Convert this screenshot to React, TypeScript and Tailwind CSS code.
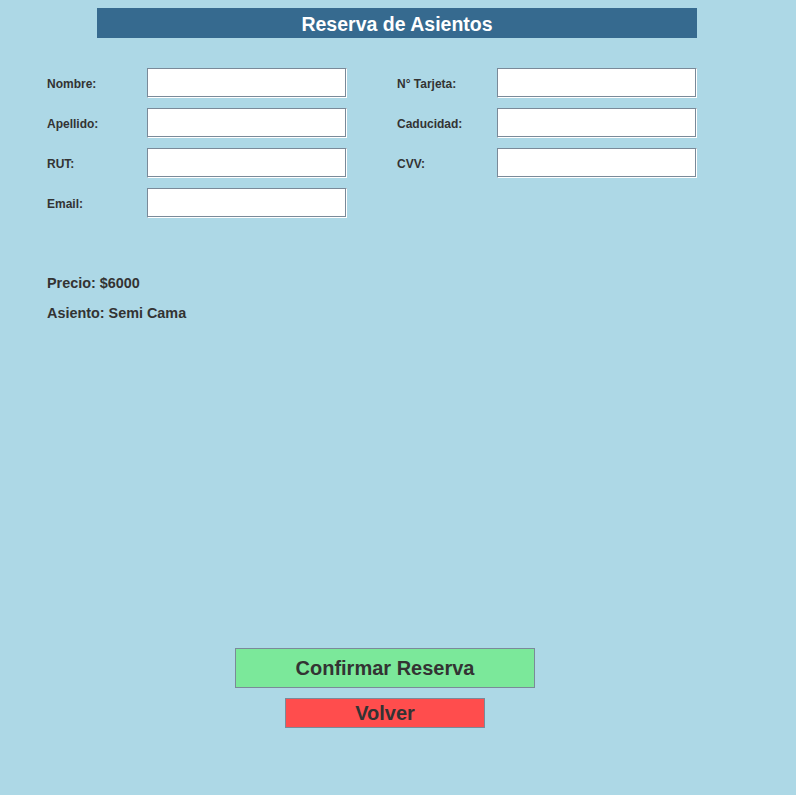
import React from "react";

const font = { fontFamily: '"Liberation Sans", Arial, sans-serif' };

function Field({ label }: { label: string }) {
  return (
    <div className="flex items-center h-[30px]">
      <label className="w-[100px] pt-[2px] text-[12px] font-bold text-[#333333] leading-none">{label}</label>
      <input
        type="text"
        className="w-[200px] h-[30px] bg-white border-t border-l border-b border-r border-t-[#7a8a99] border-l-[#7a8a99] border-b-white border-r-white shadow-[inset_-1px_-1px_0_#7a8a99] outline-none"
      />
    </div>
  );
}

export default function App() {
  return (
    <div className="min-h-[795px] w-full bg-[#add8e6] pt-[8px]" style={font}>
      <div className="ml-[97px] w-[600px] h-[30px] pt-[3px] bg-[#366a8f] flex items-center justify-center">
        <h1 className="text-white font-bold text-[19.5px] leading-none">Reserva de Asientos</h1>
      </div>

      <div className="mt-[30px] pl-[47px] flex gap-[50px]">
        <div className="flex flex-col gap-[10px]">
          <Field label="Nombre:" />
          <Field label="Apellido:" />
          <Field label="RUT:" />
          <Field label="Email:" />
        </div>
        <div className="flex flex-col gap-[10px]">
          <Field label="N° Tarjeta:" />
          <Field label="Caducidad:" />
          <Field label="CVV:" />
        </div>
      </div>

      <div className="mt-[55px] pl-[47px] flex flex-col gap-[10px]">
        <p className="text-[14.4px] leading-[20px] font-bold text-[#333333]">Precio: $6000</p>
        <p className="text-[14.4px] leading-[20px] font-bold text-[#333333]">Asiento: Semi Cama</p>
      </div>

      <div className="mt-[325px] w-[770px] flex flex-col items-center gap-[10px]">
        <button className="w-[300px] h-[40px] bg-[#7be89a] border border-[#7a8a99] text-[20px] font-bold text-[#333333] leading-none">
          Confirmar Reserva
        </button>
        <button className="w-[200px] h-[30px] bg-[#ff4d4d] border border-[#7a8a99] text-[20px] font-bold text-[#333333] leading-none">
          Volver
        </button>
      </div>
    </div>
  );
}
